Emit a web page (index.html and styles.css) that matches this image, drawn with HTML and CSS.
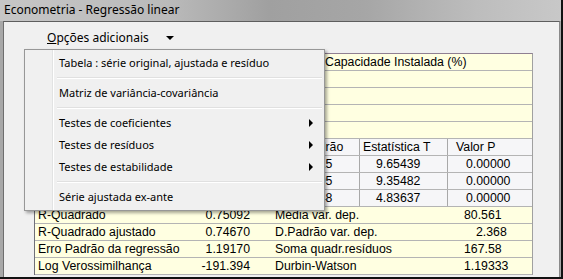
FILE: index.html
```html
<!DOCTYPE html>
<html lang="pt">
  <head>
    <meta charset="UTF-8" />
    <title>Econometria - Regressão linear</title>
    <link rel="stylesheet" href="styles.css">
  </head>
  <body>
    <div class="window">
      <div class="titlebar">Econometria - Regressão linear</div>
      <div class="client">
        <div class="menubar">
          <span class="menu-title"><u>O</u>pções adicionais</span>
          <span class="drop-arrow"></span>
        </div>

        <div class="grid">
          <div class="row head"><span class="dep">Capacidade Instalada (%)</span></div>
          <div class="row"></div>
          <div class="row"></div>
          <div class="row"></div>
          <div class="row"></div>

          <div class="row coef">
            <div class="cell"></div>
            <div class="cell"></div>
            <div class="cell c3">Erro Padrão</div>
            <div class="cell c4">Estatística T</div>
            <div class="cell c5">Valor P</div>
          </div>
          <div class="row coef">
            <div class="cell"></div>
            <div class="cell"></div>
            <div class="cell num c3">0.66515</div>
            <div class="cell num c4">9.65439</div>
            <div class="cell num c5">0.00000</div>
          </div>
          <div class="row coef">
            <div class="cell"></div>
            <div class="cell"></div>
            <div class="cell num c3">0.07395</div>
            <div class="cell num c4">9.35482</div>
            <div class="cell num c5">0.00000</div>
          </div>
          <div class="row coef">
            <div class="cell"></div>
            <div class="cell"></div>
            <div class="cell num c3">0.04748</div>
            <div class="cell num c4">4.83637</div>
            <div class="cell num c5">0.00000</div>
          </div>

          <div class="row stats">
            <div class="cell">R-Quadrado</div>
            <div class="cell val">0.75092</div>
            <div class="cell lab2">Média var. dep.</div>
            <div class="cell val2">80.561</div>
          </div>
          <div class="row stats">
            <div class="cell">R-Quadrado ajustado</div>
            <div class="cell val">0.74670</div>
            <div class="cell lab2">D.Padrão var. dep.</div>
            <div class="cell val2 short">2.368</div>
          </div>
          <div class="row stats">
            <div class="cell">Erro Padrão da regressão</div>
            <div class="cell val">1.19170</div>
            <div class="cell lab2">Soma quadr.resíduos</div>
            <div class="cell val2">167.58</div>
          </div>
          <div class="row stats">
            <div class="cell">Log Verossimilhança</div>
            <div class="cell val">-191.394</div>
            <div class="cell lab2">Durbin-Watson</div>
            <div class="cell val2">1.19333</div>
          </div>
        </div>
      </div>

      <div class="popup">
        <div class="item">Tabela : série original, ajustada e resíduo</div>
        <div class="sep"></div>
        <div class="item">Matriz de variância-covariância</div>
        <div class="sep"></div>
        <div class="item sub">Testes de coeficientes</div>
        <div class="item sub">Testes de resíduos</div>
        <div class="item sub">Testes de estabilidade</div>
        <div class="sep"></div>
        <div class="item">Série ajustada ex-ante</div>
      </div>
    </div>
  </body>
</html>
```

FILE: styles.css
```css
body {
  margin: 0;
  background-color: #ffffff;
}
.window {
  position: relative;
  width: 563px;
  height: 279px;
  box-sizing: border-box;
  display: flex;
  flex-direction: column;
  background-color: #a8a8a8;
  border-right: 2px solid #111111;
  border-bottom: 2px solid #111111;
  overflow: hidden;
}
.titlebar {
  height: 21px;
  flex: none;
  padding-left: 4px;
  line-height: 20px;
  font-family: "Segoe UI", "Noto Sans", sans-serif;
  font-size: 12px;
  color: #000000;
  background: linear-gradient(90deg, #c6c6c6 0%, #bababa 30%, #a0a0a0 48%, #a6a6a6 65%, #bdbdbd 85%, #c8c8c8 100%);
}
.client {
  flex: 1;
  margin-left: 3px;
  margin-right: 1px;
  background-color: #f0f0f0;
  border-top: 1px solid #5e5e5e;
  border-left: 1px solid #6e6e6e;
  border-right: 1px solid #8a8a8a;
}
.menubar {
  height: 31px;
  display: flex;
  align-items: center;
  padding-left: 43px;
  font-family: "Segoe UI", "Noto Sans", sans-serif;
  font-size: 12px;
  color: #000000;
}
.drop-arrow {
  margin-left: 17px;
  width: 0;
  height: 0;
  border-left: 4px solid transparent;
  border-right: 4px solid transparent;
  border-top: 4px solid #000000;
}

/* grelha de resultados */
.grid {
  margin-left: 30px;
  width: 499px;
  box-sizing: border-box;
  border-top: 1px solid #8f7f92;
  border-left: 1px solid #6f6f78;
  border-right: 1px solid #a0a0a0;
  font-family: "Liberation Sans", Arial, sans-serif;
  font-size: 12.3px;
  color: #000000;
}
.row {
  height: 16px;
  line-height: 16px;
  border-bottom: 1px solid #b4b4b4;
  background-color: #ffffe1;
  white-space: nowrap;
}
.head .dep {
  padding-left: 290px;
}
.coef {
  display: grid;
  grid-template-columns: 160px 80px 84px 88px 1fr;
  background-color: #f6f6f8;
}
.coef .cell + .cell {
  border-left: 1px solid #a8a8a8;
}
.cell {
  padding-left: 3px;
  overflow: hidden;
}
.coef .c3 {
  padding-left: 1px;
}
.coef .num.c3 {
  padding-left: 12px;
}
.coef .num.c4 {
  padding-left: 16px;
}
.coef .num.c5 {
  padding-left: 18px;
}
.coef .c5 {
  padding-left: 8px;
}
.stats {
  display: grid;
  grid-template-columns: 155px 63px 202px 1fr;
}
.stats .val {
  text-align: right;
  padding-right: 3px;
}
.stats .lab2 {
  padding-left: 22px;
}
.stats .val2 {
  padding-left: 9px;
}
.stats .val2.short {
  padding-left: 21px;
}

/* menu suspenso */
.popup {
  position: absolute;
  left: 24px;
  top: 49px;
  width: 301px;
  box-sizing: border-box;
  padding: 2px;
  background-color: #f0f0f0;
  border: 1px solid #979797;
  box-shadow: 2px 2px 3px rgba(0, 0, 0, 0.35);
  font-family: "Segoe UI", "Noto Sans", sans-serif;
  font-size: 11px;
  color: #000000;
  background-image: linear-gradient(90deg, transparent 27px, #e2e3e3 27px, #e2e3e3 28px, #ffffff 28px, #ffffff 29px, transparent 29px);
}
.item {
  position: relative;
  height: 22px;
  line-height: 22px;
  padding-left: 32px;
  white-space: nowrap;
}
.sub::after {
  content: "";
  position: absolute;
  right: 9px;
  top: 7px;
  border-top: 4px solid transparent;
  border-bottom: 4px solid transparent;
  border-left: 4px solid #000000;
}
.sep {
  height: 8px;
  margin-left: 30px;
  background: linear-gradient(#f0f0f0 3px, #e0e0e0 3px, #e0e0e0 4px, #ffffff 4px, #ffffff 5px, #f0f0f0 5px);
}
```
